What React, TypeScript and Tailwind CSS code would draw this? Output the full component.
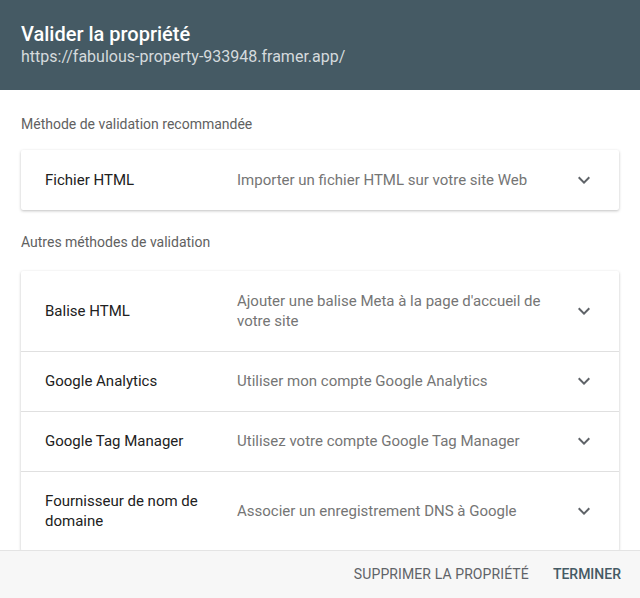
import * as React from 'react'

const Chevron = () => (
  <svg width="24" height="24" viewBox="0 0 24 24" className="shrink-0 -my-[2px] text-[#5f6368]">
    <path d="M7.41 8.59 12 13.17l4.59-4.58L18 10l-6 6-6-6 1.41-1.41z" fill="currentColor" />
  </svg>
)

const Row = ({ title, desc, border }: { title: string; desc: string; border?: boolean }) => (
  <div className={`flex items-center pl-6 pr-[23px] pb-5 ${border ? 'pt-[19px] border-t border-[#e0e0e0]' : 'pt-5'}`}>
    <div className="w-[192px] shrink-0 pr-4 text-[15px] leading-5 text-[#212121]">{title}</div>
    <div className="flex-1 pr-4 text-[15px] leading-5 text-[#757575]">{desc}</div>
    <Chevron />
  </div>
)

export default function App() {
  return (
    <div className="w-[640px] h-[598px] flex flex-col bg-white font-['Roboto',sans-serif] overflow-hidden">
      <div className="h-[90px] shrink-0 bg-[#455a64] px-[21px] pt-[21px]">
        <h1 className="text-[20px] leading-[26px] font-medium text-white">Valider la propriété</h1>
        <p className="text-[16px] leading-5 text-[#d5dadd]">https://fabulous-property-933948.framer.app/</p>
      </div>

      <div className="flex-1 overflow-hidden px-[21px]">
        <p className="pt-6 text-[14px] leading-5 text-[#616161]">Méthode de validation recommandée</p>
        <div className="mt-4 bg-white rounded-[2px] shadow-[0_1px_3px_rgba(0,0,0,0.25)]">
          <Row title="Fichier HTML" desc="Importer un fichier HTML sur votre site Web" />
        </div>

        <p className="mt-[22px] text-[14px] leading-5 text-[#616161]">Autres méthodes de validation</p>
        <div className="mt-[19px] bg-white rounded-[2px] shadow-[0_1px_3px_rgba(0,0,0,0.25)]">
          <Row title="Balise HTML" desc="Ajouter une balise Meta à la page d'accueil de votre site" />
          <Row border title="Google Analytics" desc="Utiliser mon compte Google Analytics" />
          <Row border title="Google Tag Manager" desc="Utilisez votre compte Google Tag Manager" />
          <Row border title="Fournisseur de nom de domaine" desc="Associer un enregistrement DNS à Google" />
        </div>
      </div>

      <div className="h-[48px] shrink-0 bg-[#f7f7f7] border-t border-[#e4e4e4] flex items-center justify-end gap-6 pr-[19px]">
        <button className="text-[14px] uppercase text-[#5f6368] tracking-[0.1px]">Supprimer la propriété</button>
        <button className="text-[14px] uppercase font-medium text-[#455a64]">Terminer</button>
      </div>
    </div>
  )
}
